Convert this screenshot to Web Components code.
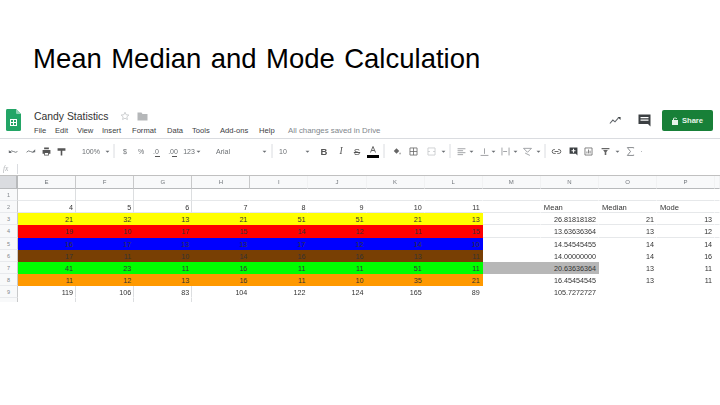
<!DOCTYPE html>
<html>
<head>
<meta charset="utf-8">
<title>Mean Median and Mode Calculation</title>
<style>
  html, body { margin: 0; padding: 0; background: #fff; width: 720px; height: 405px; overflow: hidden; font-family: "Liberation Sans", Arial, sans-serif; }
</style>
</head>
<body>
<slide-page>
  <span slot="title">Mean Median and Mode Calculation</span>
  <sheet-app></sheet-app>
</slide-page>

<script>
customElements.define(
  "slide-page",
  class extends HTMLElement {
    constructor() {
      super();
      const shadowRoot = this.attachShadow({ mode: "open" });
      shadowRoot.innerHTML = `
      <style>
      :host { display: block; width: 720px; height: 405px; overflow: hidden; }
      h1 {
        margin: 0;
        height: 100px;
        box-sizing: border-box;
        padding: 41px 0 0 33px;
        font: normal 27.5px/36px "Liberation Sans", Arial, sans-serif;
        word-spacing: 1.75px;
        color: #000;
      }
      </style>
      <h1><slot name="title"></slot></h1>
      <slot></slot>
    `;
    }
  }
);

customElements.define(
  "sheet-header",
  class extends HTMLElement {
    constructor() {
      super();
      const shadowRoot = this.attachShadow({ mode: "open" });
      const menus = [["File", 34], ["Edit", 55], ["View", 77], ["Insert", 102], ["Format", 132], ["Data", 167], ["Tools", 192], ["Add-ons", 220], ["Help", 259]];
      shadowRoot.innerHTML = `
      <style>
      :host { display: flex; height: 39px; box-sizing: border-box; border-bottom: 1px solid #dadce0; background: #fff; color: #3c4043; font-family: "Liberation Sans", Arial, sans-serif; }
      .logo { margin: 9px 0 0 6px; width: 15px; height: 22px; flex: none; }
      .main { margin-left: 13px; flex: 1; }
      .name { display: flex; align-items: center; height: 14px; margin-top: 9px; font-size: 10.4px; color: #333; }
      .name svg { flex: none; }
      .menu { display: flex; height: 12px; margin-top: 2px; font-size: 7.6px; line-height: 12px; }
      .menu span { flex: none; }
      .menu .saved { color: #80868b; font-size: 7.85px; }
      .right { display: flex; align-items: center; height: 21px; margin-top: 10px; flex: none; }
      .share { width: 51px; height: 21px; margin: 0 7px 0 11px; border-radius: 2px; background: #188038; color: #e6f4ea; font-size: 7.6px; font-weight: bold; display: flex; align-items: center; justify-content: center; gap: 4px; }
      </style>
      <svg class="logo" viewBox="0 0 15 22">
        <path d="M1 0H10L15 5V20.5Q15 22 13.500 22H1.500Q0 22 0 20.500V1.500Q0 0 1 0Z" fill="#23a566"/>
        <path d="M10 0L15 5H11Q10 5 10 4Z" fill="#8ed1b1"/>
        <path d="M4 10H11V17H4ZM5 11V13H7V11ZM8 11V13H10V11ZM5 14V16H7V14ZM8 14V16H10V14Z" fill="#fff" fill-rule="evenodd"/>
      </svg>
      <div class="main">
        <div class="name">
          <span style="width:84px">Candy Statistics</span>
          <svg width="10" height="10" viewBox="0 0 24 24" style="margin-left:2px"><path d="M12 3l2.800 6 6.500.7-4.900 4.400 1.400 6.400L12 17.300 6.200 20.500l1.400-6.400L2.700 9.700 9.200 9z" fill="none" stroke="#c4c7c9" stroke-width="2"/></svg>
          <svg width="11" height="9" viewBox="0 0 22 18" style="margin-left:7px"><path d="M1 1H9L11 4H21V17H1Z" fill="#b5b7b9"/></svg>
        </div>
        <div class="menu">
          ${menus.map(([m], i) => `<span style="width:${(i < menus.length - 1 ? menus[i + 1][1] : 288) - menus[i][1]}px">${m}</span>`).join("")}
          <span class="saved">All changes saved in Drive</span>
        </div>
      </div>
      <div class="right">
        <svg width="12" height="9" viewBox="0 0 14 10"><path d="M1 8.500L4.500 4.500 7 6.500 11 2" fill="none" stroke="#5f6368" stroke-width="1.200"/><path d="M10 1H13.500V4.500Z" fill="#3c4043"/></svg>
        <svg width="13" height="13" viewBox="0 0 13 13" style="margin-left:17px"><path d="M0.500 0.500H12.500V12.500L10 10H0.500ZM2.500 3V4.200H10.500V3ZM2.500 5.500V6.700H10.500V5.500Z" fill="#3c4043" fill-rule="evenodd"/></svg>
        <div class="share">
          <svg width="6" height="8" viewBox="0 0 6 8"><path d="M1 3V2Q1 .5 3 .5T5 2H4Q4 1.300 3 1.300T2 2V3H6V8H0V3Z" fill="#e6f4ea"/></svg>
          <span>Share</span>
        </div>
      </div>
    `;
    }
  }
);

const TOOL_ICONS = {
  undo: `<path d="M2 8Q4 5 7 7T12 7" fill="none" stroke="#6b6f73" stroke-width="1.100"/><path d="M1 5V9H5Z" fill="#6b6f73"/>`,
  redo: `<path d="M2 8Q4 5 7 7T12 7" fill="none" stroke="#6b6f73" stroke-width="1.100"/><path d="M13 4V8H9Z" fill="#6b6f73"/>`,
  print: `<path d="M4 2H10V4H4ZM2 5H12V10H10V12H4V10H2ZM5 9V11H9V9Z" fill="#555" fill-rule="evenodd"/>`,
  paint: `<path d="M2 3H12V6H8V12H6V6H2Z" fill="#555"/>`,
  down: `<path d="M4.500 6H9.500L7 8.500Z" fill="#6b6f73"/>`,
  sep: `<path d="M7 0V14" stroke="#dadce0"/>`,
  color: `<path d="M4.500 8.500L7 2.500 9.500 8.500M5.500 6.500H8.500" fill="none" stroke="#555" stroke-width=".9"/><path d="M1 11H13V14H1Z" fill="#000"/>`,
  fill: `<path d="M7 3L10.500 6.500 7 10 3.500 6.500Z" fill="#666"/><path d="M11.500 8Q13 10 11.500 11Q10 10 11.500 8Z" fill="#666"/>`,
  borders: `<path d="M2.500 2.500H11.500V11.500H2.500ZM7 2.500V11.500M2.500 7H11.500" fill="none" stroke="#666"/>`,
  merge: `<path d="M2.500 2.500H11.500V11.500H2.500ZM2.500 7H5M9 7H11.500" fill="none" stroke="#c4c7c9"/>`,
  align: `<path d="M2 3.500H12M2 6H9M2 8.500H12M2 11H9" stroke="#6b6f73" stroke-width=".8"/>`,
  valign: `<path d="M2 12H12M7 3V10" stroke="#6b6f73" stroke-width=".8"/>`,
  wrap: `<path d="M2.500 2V12M11.500 2V12M4 7H9" stroke="#6b6f73" stroke-width=".8"/>`,
  rotate: `<path d="M2 3H12L7 8ZM4 9L10 12" fill="none" stroke="#6b6f73" stroke-width=".8"/>`,
  link: `<path d="M5 4.500H4Q1.500 4.500 1.500 7T4 9.500H6M9 4.500H10Q12.500 4.500 12.500 7T10 9.500H8M4.500 7H9.500" fill="none" stroke="#555" stroke-width="1.100"/>`,
  comment: `<path d="M2 2H12V12L10 10H2ZM6.300 3.500V5.300H4.500V6.700H6.300V8.500H7.700V6.700H9.500V5.300H7.700V3.500Z" fill="#3c4043" fill-rule="evenodd"/>`,
  chart: `<path d="M2.500 2.500H11.500V11.500H2.500ZM5 9.500V7M7 9.500V4.500M9 9.500V6" fill="none" stroke="#666"/>`,
  filter: `<path d="M2 2.500H12V4H2ZM4 5H10L8 8V11.500H6V8Z" fill="#666"/>`,
  sigma: `<path d="M11 3V2H3L7 7 3 12H11V11" fill="none" stroke="#6b6f73"/>`,
  dot: `<circle cx="7" cy="7" r=".6" fill="#80868b"/>`,
};

customElements.define(
  "sheet-toolbar",
  class extends HTMLElement {
    constructor() {
      super();
      const shadowRoot = this.attachShadow({ mode: "open" });
      // [icon or text, centre x]
      const items = [
        ["undo", 13], ["redo", 30], ["print", 46], ["paint", 61],
        ["t:100%", 90], ["down", 107], ["sep", 114],
        ["t:$", 125], ["t:%", 141], ["a:.0", 156], ["a:.00", 173], ["t:123", 189], ["down", 198],
        ["t:Arial", 223], ["down", 264], ["sep", 272],
        ["t:10", 283], ["down", 307],
        ["b:B", 324], ["i:I", 341], ["s:S", 357], ["color", 373], ["sep", 384],
        ["fill", 396], ["borders", 413], ["merge", 431], ["down", 443], ["sep", 450],
        ["align", 461], ["down", 471], ["valign", 484], ["down", 493],
        ["wrap", 505], ["down", 515], ["rotate", 527], ["down", 538], ["sep", 545],
        ["link", 556], ["comment", 573], ["chart", 588], ["filter", 605], ["down", 617],
        ["sigma", 630], ["dot", 641],
      ];
      let x = 0;
      const html = items.map(([name, centre]) => {
        const isText = name.includes(":");
        const keepsSize = name === "color" || name === "sep";
        const width = isText ? 16 : keepsSize ? 14 : 11;
        const left = centre - width / 2 - x;
        x = centre + width / 2;
        if (isText) {
          const [kind, label] = name.split(":");
          return `<span class="t ${kind}" style="margin-left:${left}px;width:${width}px">${label}</span>`;
        }
        return `<svg style="margin-left:${left}px" width="${width}" height="${width}" viewBox="0 0 14 14">${TOOL_ICONS[name]}</svg>`;
      }).join("");
      shadowRoot.innerHTML = `
      <style>
      :host { display: flex; align-items: center; height: 24px; color: #6b6f73; font-family: "Liberation Sans", Arial, sans-serif; overflow: hidden; }
      svg { flex: none; }
      .t, .a { flex: none; text-align: center; font-size: 7px; white-space: nowrap; }
      .a { position: relative; }
      .a::after { content: ""; position: absolute; left: 7px; bottom: -2px; width: 5px; height: 1px; background: #555; }
      .b, .i, .s { flex: none; text-align: center; font-size: 9.500px; color: #555; }
      .b { font-weight: bold; }
      .i { font-style: italic; font-family: "Liberation Serif", serif; }
      .s { text-decoration: line-through; }
      </style>
      ${html}
    `;
    }
  }
);

customElements.define(
  "formula-bar",
  class extends HTMLElement {
    constructor() {
      super();
      const shadowRoot = this.attachShadow({ mode: "open" });
      shadowRoot.innerHTML = `
      <style>
      :host { display: flex; align-items: center; height: 12px; box-sizing: border-box; font: italic 7.500px "Liberation Serif", serif; color: #b0b3b6; }
      span { width: 18px; box-sizing: border-box; padding-left: 3px; height: 10px; line-height: 10px; border-right: 1px solid #dadce0; }
      </style>
      <span>fx</span>
    `;
    }
  }
);

customElements.define(
  "sheet-grid",
  class extends HTMLElement {
    constructor() {
      super();
      const shadowRoot = this.attachShadow({ mode: "open" });
      const letters = ["E", "F", "G", "H", "I", "J", "K", "L", "M", "N", "O", "P", ""];
      const rows = [
        { n: 1, cells: [] },
        { n: 2, cells: [4, 5, 6, 7, 8, 9, 10, 11], mean: "Mean", med: "Median", mode: "Mode" },
        { n: 3, bg: "#ffff00", cells: [21, 32, 13, 21, 51, 51, 21, 13], mean: "26.81818182", med: 21, mode: 13 },
        { n: 4, bg: "#ff0000", cells: [19, 10, 17, 15, 14, 12, 11, 15], mean: "13.63636364", med: 13, mode: 12 },
        { n: 5, bg: "#0000ff", cells: [16, 17, 13, 13, 17, 12, 14, 10], mean: "14.54545455", med: 14, mode: 14 },
        { n: 6, bg: "#783f04", cells: [17, 11, 10, 14, 16, 16, 13, 11], mean: "14.00000000", med: 14, mode: 16 },
        { n: 7, bg: "#00ff00", cells: [41, 23, 11, 16, 11, 11, 51, 11], mean: "20.63636364", gray: true, med: 13, mode: 11 },
        { n: 8, bg: "#ff9900", cells: [11, 12, 13, 16, 11, 10, 35, 21], mean: "16.45454545", med: 13, mode: 11 },
        { n: 9, cells: [119, 106, 83, 104, 122, 124, 165, 89], mean: "105.7272727" },
        { n: "", cells: [] },
      ];
      const rowHtml = rows.map((r) => {
        // the light row lines only show down to row 4
        const rule = r.n && r.n <= 4 ? " rule" : "";
        const coloured = r.bg ? ` style="background:${r.bg};border-color:${r.bg}"` : "";
        let cols = `<div class="rh">${r.n}</div>`;
        for (let i = 0; i < 8; i++) {
          const v = r.cells[i] === undefined ? "" : r.cells[i];
          cols += `<div class="c num${rule}${i < 3 ? " line" : ""}"${coloured}>${v}</div>`;
        }
        const g = r.gray ? ' style="background:#b7b7b7;border-color:#b7b7b7"' : "";
        cols += `<div class="c${rule}"${g}></div>`;
        if (r.n === 2) {
          cols += `<div class="c head${rule}">${r.mean}</div>`;
          cols += `<div class="c head${rule}">${r.med}</div>`;
          cols += `<div class="c head${rule}">${r.mode}</div>`;
        } else {
          cols += `<div class="c num${rule}"${g}>${r.mean || ""}</div>`;
          cols += `<div class="c num${rule}">${r.med === undefined ? "" : r.med}</div>`;
          cols += `<div class="c num${rule}">${r.mode === undefined ? "" : r.mode}</div>`;
        }
        cols += `<div class="c${rule}"></div>`;
        return cols;
      }).join("");
      shadowRoot.innerHTML = `
      <style>
      :host {
        display: grid;
        grid-template-columns: 18px repeat(12, 58.1px) 5px;
        grid-template-rows: 13px;
        grid-auto-rows: 12.17px;
        height: 126px;
        overflow: hidden;
        font-family: "Liberation Sans", Arial, sans-serif;
        font-size: 7.2px;
        color: #333;
        border-top: 1px solid #c0c0c0;
      }
      .corner { background: #dadce0; border-right: 2px solid #b8babc; border-bottom: 1px solid #b8babc; box-sizing: border-box; }
      .ch { box-sizing: border-box; background: #f8f9fa; border-right: 1px solid #f1f2f3; border-bottom: 1px solid #b8babc; text-align: center; line-height: 13px; font-size: 6px; color: #70757a; }
      .ch.line { border-right-color: #c8c9ca; }
      .rh { box-sizing: border-box; background: #f8f9fa; border-right: 1px solid #c8c9ca; border-bottom: 1px solid #e8eaed; text-align: center; line-height: 13px; font-size: 5.500px; color: #80868b; }
      .c { box-sizing: border-box; border-right: 1px solid transparent; border-bottom: 1px solid transparent; padding-top: 1px; line-height: 12px; white-space: nowrap; overflow: hidden; }
      .line { border-right-color: #dcdee0; }
      .rule { border-bottom-color: #e6e8ea; }
      .num { text-align: right; padding-right: 2px; }
      .head { padding-left: 3px; font-size: 7.6px; }
      </style>
      <div class="corner"></div>
      ${letters.map((l, i) => `<div class="ch${i < 4 ? " line" : ""}">${l}</div>`).join("")}
      ${rowHtml}
    `;
    }
  }
);

customElements.define(
  "sheet-app",
  class extends HTMLElement {
    constructor() {
      super();
      const shadowRoot = this.attachShadow({ mode: "open" });
      shadowRoot.innerHTML = `
      <style>
      :host { display: block; width: 720px; overflow: hidden; filter: blur(.3px); }
      </style>
      <sheet-header></sheet-header>
      <sheet-toolbar></sheet-toolbar>
      <formula-bar></formula-bar>
      <sheet-grid></sheet-grid>
    `;
    }
  }
);
</script>
</body>
</html>
